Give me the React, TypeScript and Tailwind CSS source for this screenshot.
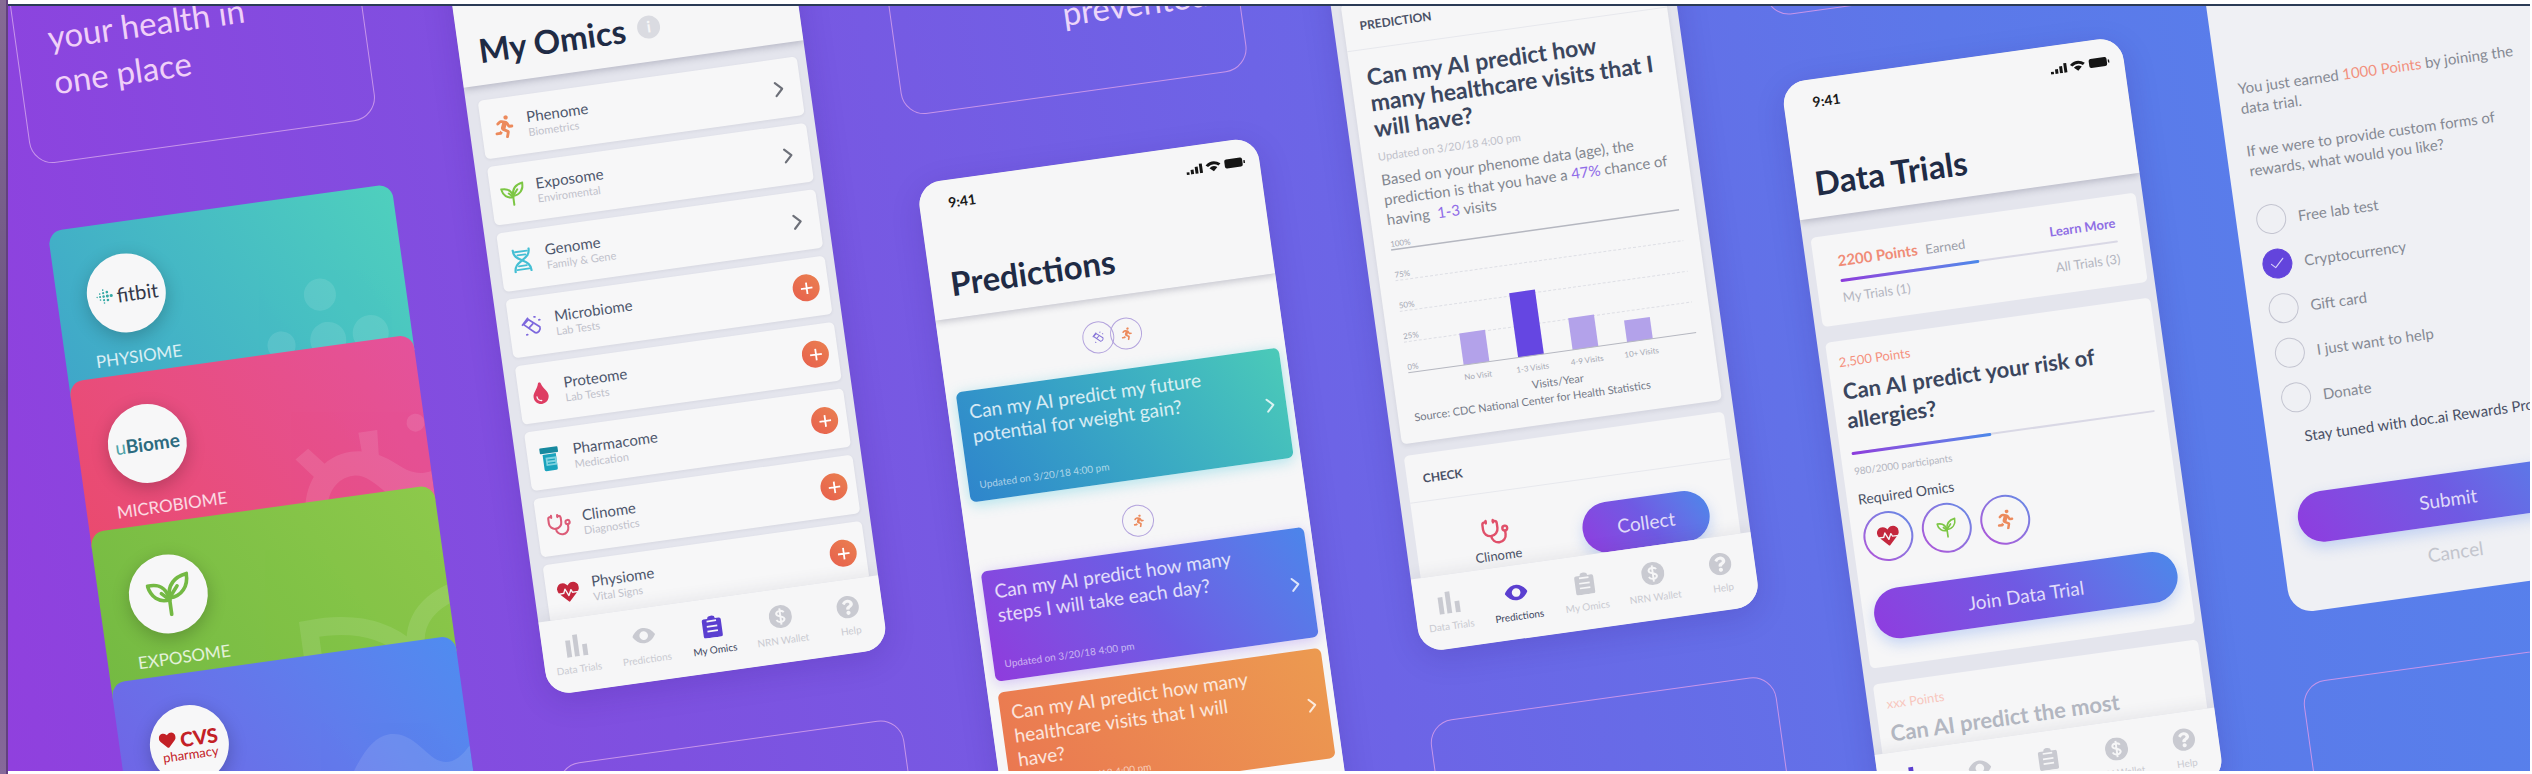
import React from "react";
import { Check, ChevronRight, Stethoscope } from "lucide-react";
import { FaRunning, FaTint, FaHeartbeat, FaQuestionCircle, FaHeart } from "react-icons/fa";

type IconProps = { className?: string };

const SproutIcon = ({ className }: IconProps) => (
  <svg viewBox="0 0 24 24" className={className} fill="none" stroke="currentColor" strokeWidth="2" strokeLinecap="round" strokeLinejoin="round">
    <path d="M12 23v-8" />
    <path d="M12 15C6 16 2 12 1 6c6-.5 10 1.500 11 9Z" />
    <path d="M12 14c0-7 4-11 11-12 0 7-4 12-11 12Z" />
    <path d="M12 15 8 11M12 14l5-6" />
  </svg>
);

const TubeIcon = ({ className }: IconProps) => (
  <svg viewBox="0 0 24 24" className={className} fill="none" stroke="currentColor" strokeWidth="2" strokeLinejoin="round">
    <path d="m3 9 6-5 12 10c1 4-3 7-6 6Z" />
    <path d="M1 10 9 2M8 14l6-5" />
    <path d="M16 2h1M21 6h1M5 21h1" strokeLinecap="round" />
  </svg>
);

const HelixIcon = ({ className }: IconProps) => (
  <svg viewBox="0 0 20 24" className={className} fill="none" stroke="currentColor" strokeLinecap="round">
    <path d="M2 1c0 6 3 8 8 11s8 5 8 11" strokeWidth="2.200" />
    <path d="M18 1c0 6-3 8-8 11s-8 5-8 11" strokeWidth="2.200" />
    <path d="M4 3h12M6 6.500h8M6 17.500h8M4 21h12" strokeWidth="1.800" />
  </svg>
);

const PillBottleIcon = ({ className }: IconProps) => (
  <svg viewBox="0 0 24 30" className={className}>
    <rect x="1" y="1" width="22" height="7" rx="1" fill="#17899f" />
    <path d="M4 9h16v18a2 2 0 0 1-2 2H6a2 2 0 0 1-2-2Z" fill="#1aa3bd" />
    <rect x="7" y="13" width="13" height="10" fill="#7fd3e0" />
    <path d="M9 16h9M9 20h9" stroke="#1aa3bd" strokeWidth="1.500" />
  </svg>
);

const BarsIcon = ({ className }: IconProps) => (
  <svg viewBox="0 0 24 24" className={className} fill="currentColor">
    <rect x="1" y="6" width="5" height="18" />
    <rect x="9" y="1" width="5" height="23" />
    <rect x="18" y="12" width="5" height="12" />
  </svg>
);

const EyeIcon = ({ className }: IconProps) => (
  <svg viewBox="0 0 24 24" className={className} fill="currentColor">
    <path fillRule="evenodd" d="M0 12c3-5 7-8 12-8s9 3 12 8c-3 5-7 8-12 8S3 17 0 12Zm12-4.500a4.500 4.500 0 1 0 0 9 4.500 4.500 0 0 0 0-9Z" />
  </svg>
);

const ClipboardIcon = ({ className }: IconProps) => (
  <svg viewBox="0 0 24 24" className={className}>
    <path d="M4 4h4a4 3 0 0 1 8 0h4a2 2 0 0 1 2 2v16a2 2 0 0 1-2 2H4a2 2 0 0 1-2-2V6a2 2 0 0 1 2-2Z" fill="currentColor" />
    <path d="M7 6.500h10M6.500 12h11M6.500 17h11" stroke="#f6f6f7" strokeWidth="1.800" />
  </svg>
);

const DollarIcon = ({ className }: IconProps) => (
  <svg viewBox="0 0 24 24" className={className}>
    <circle cx="12" cy="12" r="12" fill="currentColor" />
    <path d="M16 8c-1-2.500-7-3-8 .5-.5 4 8 2.500 8 6.500-1 3.500-7 3.500-8.500 0M12 3.500v17" fill="none" stroke="#f6f6f7" strokeWidth="2" />
  </svg>
);

const FitbitMark = () => (
  <svg viewBox="0 0 18 18" className="size-[18px]" fill="#35a9a5">
    {[
      [2, 9, 0.7], [5, 9, 1], [5, 6, 0.8], [5, 12, 0.8], [8.500, 9, 1.300], [8.500, 5.500, 1.100], [8.500, 12.500, 1.100], [8.500, 2.500, 0.8], [8.500, 15.500, 0.8],
      [12.300, 9, 1.500], [12.300, 5, 1.300], [12.300, 13, 1.300], [16.200, 9, 1.600],
    ].map(([x, y, r], i) => (
      <circle key={i} cx={x} cy={y} r={r} />
    ))}
  </svg>
);

const StatusIcons = () => (
  <svg viewBox="0 0 60 12" className="h-3 w-[60px]" fill="#151515">
    <path d="M0 9h3v2.500H0zM4.500 7h3v4.500h-3zM9 4.500h3v7H9zM13.500 2h3v9.500h-3z" />
    <path d="M20 4.500q7.500-6 15 0l-2.200 2q-5.300-4-10.600 0ZM23.500 7.800q4-3 8 0l-4 3.700Z" />
    <rect x="39" y="1.500" width="18" height="9" rx="2" />
    <rect x="58" y="4.500" width="1.500" height="3" />
  </svg>
);

/* ---------- shared pieces ---------- */

const Outline = ({ children, className = "" }: { children?: React.ReactNode; className?: string }) => (
  <div className={`flex h-[440px] shrink-0 flex-col rounded-3xl border border-[#c795ea] ${className}`}>{children}</div>
);

const Phone = ({ children }: { children: React.ReactNode }) => (
  <article className="mx-auto flex h-[752px] w-[343px] shrink-0 flex-col overflow-hidden rounded-3xl bg-[#e4e5ed] shadow-[0_8px_30px_rgba(50,20,130,0.18)]">
    {children}
  </article>
);

const PhoneHeader = ({ title, children }: { title: string; children?: React.ReactNode }) => (
  <header className="z-10 flex h-[138px] shrink-0 flex-col bg-[#f6f6f7] shadow-[0_2px_7px_rgba(40,40,70,0.25)]">
    <div className="flex items-center justify-between pt-[14px] pr-[14px] pl-[29px] text-[14px] leading-[18px] font-bold text-[#1a1a1a]">
      <span>9:41</span>
      <StatusIcons />
    </div>
    <div className="mt-auto flex items-center gap-3 pb-[15px] pl-5">
      <h2 className="text-[33px] leading-10 font-bold text-[#1f2b45]">{title}</h2>
      {children}
    </div>
  </header>
);

const tabs = [
  { label: "Data Trials", Icon: BarsIcon },
  { label: "Predictions", Icon: EyeIcon },
  { label: "My Omics", Icon: ClipboardIcon },
  { label: "NRN Wallet", Icon: DollarIcon },
  { label: "Help", Icon: FaQuestionCircle },
];

const TabBar = ({ active }: { active: string }) => (
  <nav className="z-10 grid h-[74px] shrink-0 grid-cols-5 bg-[#f6f6f7] pt-4 shadow-[0_-4px_14px_rgba(60,60,90,0.08)]">
    {tabs.map(({ label, Icon }) => {
      const on = label === active;
      return (
        <a key={label} href="#" className={`flex flex-col items-center gap-[6px] ${on ? "text-[#5b3fd0]" : "text-[#c9cad1]"}`}>
          <Icon className="size-[23px]" />
          <span className={`text-[10px] leading-3 ${on ? "text-[#3c4560]" : ""}`}>{label}</span>
        </a>
      );
    })}
  </nav>
);

const Pill = ({ children, className = "" }: { children: React.ReactNode; className?: string }) => (
  <button
    type="button"
    className={`h-[51px] shrink-0 rounded-full bg-linear-60 from-[#8f3bdf] via-[#6f5ae3] to-[#4a88ea] text-[19px] leading-6 text-[#e0dbf9] shadow-[0_6px_14px_rgba(90,140,240,0.3)] ${className}`}
  >
    {children}
  </button>
);

/* ---------- column 1: source cards ---------- */

const sources = [
  {
    name: "PHYSIOME",
    tone: "bg-linear-60 from-[#3fa6c9] to-[#4fd0bd]",
    mark: (
      <>
        <FitbitMark />
        <span className="text-[20px] leading-6 text-[#33384a]">fitbit</span>
      </>
    ),
    art: (
      <g fill="#fff">
        <circle cx="261" cy="100" r="16" />
        <circle cx="216" cy="145" r="14" />
        <circle cx="263" cy="146" r="18" />
        <circle cx="306" cy="145" r="18" />
      </g>
    ),
  },
  {
    name: "MICROBIOME",
    tone: "bg-linear-60 from-[#ea4a6e] to-[#e4529b]",
    mark: (
      <span className="text-[19px] leading-6 font-bold text-[#2c6b80]">
        <span className="font-normal text-[#4fa3a8]">u</span>Biome
      </span>
    ),
    art: (
      <g fill="#fff">
        <path d="M216 170c0-34 22-62 54-62 22 0 36 12 48 22 10 8 18 10 29 8v32h-20c-24 0-36-38-58-38-20 0-31 18-31 38Z" />
        <path d="m214 108 14-9 20 24-14 10ZM280 90h19l-2 26h-16Z" />
        <circle cx="338" cy="88" r="9" />
      </g>
    ),
  },
  {
    name: "EXPOSOME",
    tone: "bg-linear-60 from-[#74ba42] to-[#8dc94b]",
    mark: <SproutIcon className="size-[44px] text-[#74b944]" />,
    art: (
      <g fill="none" stroke="#fff" strokeWidth="18">
        <path d="M204 172v-46c42-2 74 8 96 34" />
        <path d="M308 170c-4-28 8-52 46-62" />
      </g>
    ),
  },
  {
    name: "PHARMACOME",
    tone: "bg-linear-60 from-[#6f66e6] from-10% to-[#4f8cf0]",
    mark: (
      <span className="flex flex-col items-center text-[#c32026]">
        <span className="flex items-center gap-1 text-[20px] leading-[18px] font-black">
          <FaHeart className="size-[17px]" />
          CVS
        </span>
        <span className="text-[13px] leading-[14px]">pharmacy</span>
      </span>
    ),
    art: <path fill="#fff" d="M200 168c26-44 44-78 68-79 20 0 28 16 42 30 12 10 24 6 37-8v57Z" />,
  },
];

const SourceStack = () => (
  <div className="-mr-1 ml-[6px] flex flex-col">
    {sources.map((s, i) => (
      <section key={s.name} className={`relative flex h-[168px] shrink-0 flex-col overflow-hidden rounded-t-[14px] ${i ? "-mt-4" : ""} ${s.tone}`}>
        <svg viewBox="0 0 347 168" className="absolute top-0 right-0 h-[168px] w-[347px]" opacity="0.1">
          {s.art}
        </svg>
        <div className="relative mt-8 ml-[30px] flex size-[79px] items-center justify-center gap-1 rounded-full bg-[#f7f7f8] shadow-[0_5px_18px_rgba(0,0,0,0.22)]">
          {s.mark}
        </div>
        <h3 className="relative mt-[15px] ml-[30px] text-[17px] leading-5 text-white/80">{s.name}</h3>
      </section>
    ))}
  </div>
);

/* ---------- column 2: omics list ---------- */

const omics = [
  { name: "Phenome", kind: "Biometrics", icon: <FaRunning className="size-[23px] text-[#ec8a5c]" />, done: true },
  { name: "Exposome", kind: "Enviromental", icon: <SproutIcon className="size-6 text-[#7cc644]" />, done: true },
  { name: "Genome", kind: "Family & Gene", icon: <HelixIcon className="h-6 w-5 text-[#45bfd4]" />, done: true },
  { name: "Microbiome", kind: "Lab Tests", icon: <TubeIcon className="size-[21px] text-[#7d68dd]" />, done: false },
  { name: "Proteome", kind: "Lab Tests", icon: <FaTint className="size-[22px] text-[#de3d63]" />, done: false },
  { name: "Pharmacome", kind: "Medication", icon: <PillBottleIcon className="h-[25px] w-5" />, done: false },
  { name: "Clinome", kind: "Diagnostics", icon: <Stethoscope className="size-[25px] text-[#dc5c78]" />, done: false },
  { name: "Physiome", kind: "Vital Signs", icon: <FaHeartbeat className="size-[22px] text-[#c4273d]" />, done: false },
];

const MyOmics = () => (
  <Phone>
    <PhoneHeader title="My Omics">
      <span className="flex size-[23px] items-center justify-center rounded-full bg-[#dadbe1] text-[16px] leading-4 font-bold text-[#f6f6f7]">i</span>
    </PhoneHeader>
    <ul className="flex min-h-0 flex-1 flex-col gap-2 overflow-hidden pt-[15px] pr-[9px] pl-3">
      {omics.map((o) => (
        <li key={o.name} className="flex h-[59px] shrink-0 items-center rounded-[5px] bg-[#f7f7f8] pr-[9px] pl-2 shadow-[0_1px_3px_rgba(60,60,90,0.08)]">
          <span className="flex w-7 shrink-0 justify-center">{o.icon}</span>
          <span className="ml-[10px] flex flex-1 flex-col">
            <span className="text-[15px] leading-[17px] text-[#4d566c]">{o.name}</span>
            <span className="text-[11px] leading-[14px] text-[#bfc1cb]">{o.kind}</span>
          </span>
          {o.done ? (
            <a href="#" aria-label={o.name}>
              <ChevronRight className="size-[26px] text-[#6d7079]" />
            </a>
          ) : (
            <button type="button" aria-label={o.name} className="flex size-[27px] items-center justify-center rounded-full bg-linear-to-tr from-[#e75f4d] to-[#ea8050]">
              <svg viewBox="0 0 12 12" className="size-3" stroke="#fff" strokeWidth="1.800">
                <path d="M0 6h12M6 0v12" />
              </svg>
            </button>
          )}
        </li>
      ))}
    </ul>
    <TabBar active="My Omics" />
  </Phone>
);

/* ---------- column 3: predictions ---------- */

const Badge = ({ children, className = "" }: { children: React.ReactNode; className?: string }) => (
  <span className={`flex size-8 items-center justify-center rounded-full border border-[#b3a3dd] ${className}`}>{children}</span>
);

const PredictionCard = ({ lines, tone }: { lines: string[]; tone: string }) => (
  <a href="#" className={`flex h-[111px] shrink-0 items-center rounded-md pr-1 pl-[11px] text-white/80 ${tone}`}>
    <span className="flex flex-1 flex-col self-stretch pt-[9px] pb-[11px]">
      {lines.map((l) => (
        <span key={l} className="text-[19px] leading-6 whitespace-nowrap">
          {l}
        </span>
      ))}
      <span className="mt-auto text-[10px] leading-3 text-white/60">Updated on 3/20/18 4:00 pm</span>
    </span>
    <ChevronRight className="size-6 shrink-0" />
  </a>
);

const Predictions = () => (
  <Phone>
    <PhoneHeader title="Predictions" />
    <div className="flex min-h-0 flex-1 flex-col overflow-hidden bg-[#f6f6f7] pr-[7px] pl-[10px]">
      <div className="flex h-[74px] shrink-0 items-center justify-center pt-1">
        <Badge>
          <TubeIcon className="size-3 text-[#8775d8]" />
        </Badge>
        <Badge className="-ml-1">
          <FaRunning className="size-[13px] text-[#ec8a5c]" />
        </Badge>
      </div>
      <PredictionCard
        lines={["Can my AI predict my future", "potential for weight gain?"]}
        tone="bg-linear-60 from-[#2f85cc] to-[#4bcab8] shadow-[0_3px_14px_rgba(70,200,220,0.4)]"
      />
      <div className="flex h-[70px] shrink-0 items-center justify-center pt-3">
        <Badge>
          <FaRunning className="size-[13px] text-[#ec8a5c]" />
        </Badge>
      </div>
      <PredictionCard
        lines={["Can my AI predict how many", "steps I will take each day?"]}
        tone="bg-linear-60 from-[#8f3bdd] via-[#6d5ce4] to-[#4b85ea] shadow-[0_3px_14px_rgba(150,110,240,0.35)]"
      />
      <div className="h-[11px] shrink-0" />
      <PredictionCard
        lines={["Can my AI predict how many", "healthcare visits that I will", "have?"]}
        tone="bg-linear-60 from-[#ea7651] to-[#ec9a50]"
      />
      <div className="mt-[13px] h-[111px] shrink-0 rounded-md bg-linear-60 from-[#2f85cc] to-[#4bcab8]" />
    </div>
    <TabBar active="Predictions" />
  </Phone>
);

/* ---------- column 4: prediction detail ---------- */

const bars = [
  { x: 56, h: 32, label: "No Visit", main: false },
  { x: 111, h: 65, label: "1-3 Visits", main: true },
  { x: 166, h: 32, label: "4-9 Visits", main: false },
  { x: 221, h: 22, label: "10+ Visits", main: false },
];

const Chart = () => (
  <svg viewBox="0 0 291 172" className="mt-[10px] h-[172px] w-[291px]" fontSize="8" fill="#a5a8b3">
    <path d="M0 11h291" stroke="#b5b7c0" strokeWidth="1.500" />
    <path d="M0 42h291M0 73h291M0 104h291" stroke="#dedfe5" strokeDasharray="3 2" />
    {["100%", "75%", "50%", "25%", "0%"].map((t, i) => (
      <text key={t} x="0" y={8 + i * 31}>
        {t}
      </text>
    ))}
    {bars.map((b) => (
      <g key={b.x}>
        <rect x={b.x} y={135 - b.h} width="26" height={b.h} fill={b.main ? "#6546e2" : "#b3a2ea"} />
        <text x={b.x + 13} y="150" textAnchor="middle">
          {b.label}
        </text>
      </g>
    ))}
    <path d="M0 135h291" stroke="#b5b7c0" />
    <text x="147" y="168" fontSize="11" textAnchor="middle" fill="#747987">
      Visits/Year
    </text>
  </svg>
);

const Detail = () => (
  <Phone>
    <div className="flex min-h-0 flex-1 flex-col gap-3 overflow-hidden px-[10px] pt-[99px]">
      <section className="flex h-[444px] shrink-0 flex-col rounded-[5px] bg-[#f6f6f7] shadow-[0_2px_4px_rgba(60,60,90,0.1)]">
        <h3 className="h-12 shrink-0 border-b border-[#e7e8ed] px-4 pt-4 text-[12px] leading-4 font-bold text-[#4a5166]">PREDICTION</h3>
        <div className="flex flex-col px-4 pt-[14px] whitespace-nowrap">
          <h2 className="text-[23px] leading-[26px] font-bold text-[#3b465e]">
            Can my AI predict how
            <br />
            many healthcare visits that I
            <br />
            will have?
          </h2>
          <p className="mt-2 text-[11px] leading-4 text-[#bfc1ca]">Updated on 3/20/18 4:00 pm</p>
          <p className="mt-[5px] text-[15px] leading-5 text-[#82868f]">
            Based on your phenome data (age), the
            <br />
            prediction is that you have a <b className="font-normal text-[#8f6be8]">47%</b> chance of
            <br />
            having&nbsp; <b className="font-normal text-[#8f6be8]">1-3</b> visits
          </p>
          <Chart />
          <p className="text-[11px] leading-4 text-[#747987]">Source: CDC National Center for Health Statistics</p>
        </div>
      </section>
      <section className="flex h-[160px] shrink-0 flex-col rounded-[5px] bg-[#f6f6f7]">
        <h3 className="h-12 shrink-0 border-b border-[#e7e8ed] px-4 pt-[17px] text-[12px] leading-4 font-bold text-[#4a5166]">CHECK</h3>
        <div className="flex items-start justify-between pt-[25px] pr-7 pl-[57px]">
          <div className="flex flex-col items-center">
            <Stethoscope className="size-[29px] text-[#e0506a]" />
            <span className="mt-px text-[13px] leading-4 text-[#4a5166]">Clinome</span>
          </div>
          <Pill className="w-32">Collect</Pill>
        </div>
      </section>
    </div>
    <TabBar active="Predictions" />
  </Phone>
);

/* ---------- column 5: data trials ---------- */

const Progress = ({ className = "", fill }: { className?: string; fill: string }) => (
  <div className={`h-[2px] rounded-full bg-[#d9d8e5] ${className}`}>
    <div className={`h-[3px] rounded-full bg-linear-to-r from-[#8c3bdc] to-[#4a88ea] ${fill}`} />
  </div>
);

const Ring = ({ children }: { children: React.ReactNode }) => (
  <span className="flex size-[50px] rounded-full bg-linear-to-tr from-[#b14fd8] to-[#5a8be6] p-[2px]">
    <span className="flex flex-1 items-center justify-center rounded-full bg-[#f6f6f7]">{children}</span>
  </span>
);

const DataTrials = () => (
  <Phone>
    <PhoneHeader title="Data Trials" />
    <div className="flex min-h-0 flex-1 flex-col gap-4 overflow-hidden pt-[19px] pr-[7px] pl-2 whitespace-nowrap">
      <section className="flex h-[90px] shrink-0 flex-col rounded-[5px] bg-[#f6f6f7] px-6 pt-4">
        <div className="flex items-center justify-between">
          <p className="text-[13px] leading-5 text-[#9a9da8]">
            <b className="mr-2 text-[15px] text-[#f08c77]">2200 Points</b>Earned
          </p>
          <a href="#" className="text-[13px] leading-5 font-bold text-[#8f6ee4]">
            Learn More
          </a>
        </div>
        <Progress className="mt-2" fill="w-1/2" />
        <div className="mt-[7px] flex justify-between text-[13px] leading-[18px] text-[#b3b5c0]">
          <span>My Trials (1)</span>
          <span>All Trials (3)</span>
        </div>
      </section>
      <section className="flex h-[329px] shrink-0 flex-col rounded-[5px] bg-[#f6f6f7] px-[11px] pt-3">
        <p className="text-[13px] leading-[18px] text-[#f5917e]">2,500 Points</p>
        <h3 className="mt-[6px] text-[22px] leading-[29px] font-bold text-[#3b465e]">
          Can AI predict your risk of
          <br />
          allergies?
        </h3>
        <Progress className="mt-[18px]" fill="w-[46%]" />
        <p className="mt-[10px] text-[10px] leading-[14px] text-[#b3b5c0]">980/2000 participants</p>
        <p className="mt-[13px] text-[14px] leading-[18px] text-[#4a5166]">Required Omics</p>
        <div className="mt-[6px] flex gap-[9px]">
          <Ring>
            <FaHeartbeat className="size-[22px] text-[#c4273d]" />
          </Ring>
          <Ring>
            <SproutIcon className="size-[20px] text-[#7cc644]" />
          </Ring>
          <Ring>
            <FaRunning className="size-[20px] text-[#ec8a5c]" />
          </Ring>
        </div>
        <Pill className="mt-[27px]">Join Data Trial</Pill>
      </section>
      <section className="flex h-[140px] shrink-0 flex-col rounded-[5px] bg-[#f6f6f7] px-[11px] pt-3">
        <p className="text-[13px] leading-[18px] text-[#f8c6bd]">xxx Points</p>
        <h3 className="mt-[6px] text-[22px] leading-[29px] font-bold text-[#b3b7c1]">Can AI predict the most</h3>
      </section>
    </div>
    <TabBar active="Data Trials" />
  </Phone>
);

/* ---------- column 6: reward survey ---------- */

const rewards = ["Free lab test", "Cryptocurrency", "Gift card", "I just want to help", "Donate"];

const Survey = () => (
  <form className="flex h-[752px] w-[343px] shrink-0 flex-col rounded-3xl bg-[#eff0f4] px-5 pt-[214px] whitespace-nowrap">
    <p className="text-[15px] leading-5 text-[#858993]">
      You just earned <span className="text-[#f2917e]">1000 Points</span> by joining the
      <br />
      data trial.
    </p>
    <p className="mt-[23px] text-[15px] leading-5 text-[#858993]">
      If we were to provide custom forms of
      <br />
      rewards, what would you like?
    </p>
    <div className="mt-[18px] flex flex-col">
      {rewards.map((r) => (
        <label key={r} className="flex h-[45px] items-center gap-3 text-[15px] leading-5 text-[#858993]">
          <span className="grid size-[30px] place-items-center">
            <input
              type="radio"
              name="reward"
              defaultChecked={r === "Cryptocurrency"}
              className="peer col-start-1 row-start-1 size-[30px] appearance-none rounded-full border border-[#c3c4d0] checked:border-[#6344dc] checked:bg-[#6344dc]"
            />
            <Check strokeWidth={1.500} className="col-start-1 row-start-1 hidden size-[18px] text-[#d9d2fa] peer-checked:block" />
          </span>
          {r}
        </label>
      ))}
    </div>
    <p className="mt-[7px] ml-[18px] text-[15px] leading-5 text-[#4a5166]">Stay tuned with doc.ai Rewards Program</p>
    <Pill className="mt-[47px]">Submit</Pill>
    <button type="button" className="mt-4 text-[19px] leading-6 text-[#c3c5cd]">
      Cancel
    </button>
  </form>
);

export default function App() {
  return (
    <div className="flex h-screen w-full overflow-hidden bg-white font-['Lato',sans-serif]">
      <aside className="flex w-2 shrink-0 flex-col border-r-2 border-[#62407f] bg-linear-to-b from-[#866b95] via-[#6a5480] to-[#86699a]" />
      <main className="mt-1 mr-[2px] mb-[3px] min-w-0 flex-1 overflow-hidden border-t-2 border-[#2b3b56] bg-[linear-gradient(78deg,#9040de_0%,#7e51e0_25%,#6d64e6_52%,#5c78e9_78%,#5682ec_100%)]">
        <div className="flex w-max origin-top-left -rotate-[7.95deg] gap-[86px] pl-[2px]">
          <div className="-mt-[278px] flex w-[349px] flex-col gap-[67px]">
            <Outline className="justify-end pb-[57px] pl-8">
              <p className="text-[33px] leading-[45px] text-[#f0d0f8]">
                your health in
                <br />
                one place
              </p>
            </Outline>
            <SourceStack />
          </div>
          <div className="mt-[6px] flex w-[349px] flex-col gap-[70px]">
            <MyOmics />
            <Outline />
          </div>
          <div className="-mt-[206px] flex w-[349px] flex-col gap-[68px]">
            <Outline className="items-end justify-end pr-[30px] pb-[57px]">
              <p className="text-[33px] leading-[45px] text-[#ecd6fa]">prevented</p>
            </Outline>
            <Predictions />
          </div>
          <div className="mt-[84px] flex w-[349px] flex-col gap-[70px]">
            <Detail />
            <Outline />
          </div>
          <div className="-mt-[185px] flex w-[349px] flex-col gap-[67px]">
            <Outline />
            <DataTrials />
          </div>
          <div className="mt-[166px] flex w-[349px] flex-col gap-[70px]">
            <Survey />
            <Outline />
          </div>
        </div>
      </main>
    </div>
  );
}
